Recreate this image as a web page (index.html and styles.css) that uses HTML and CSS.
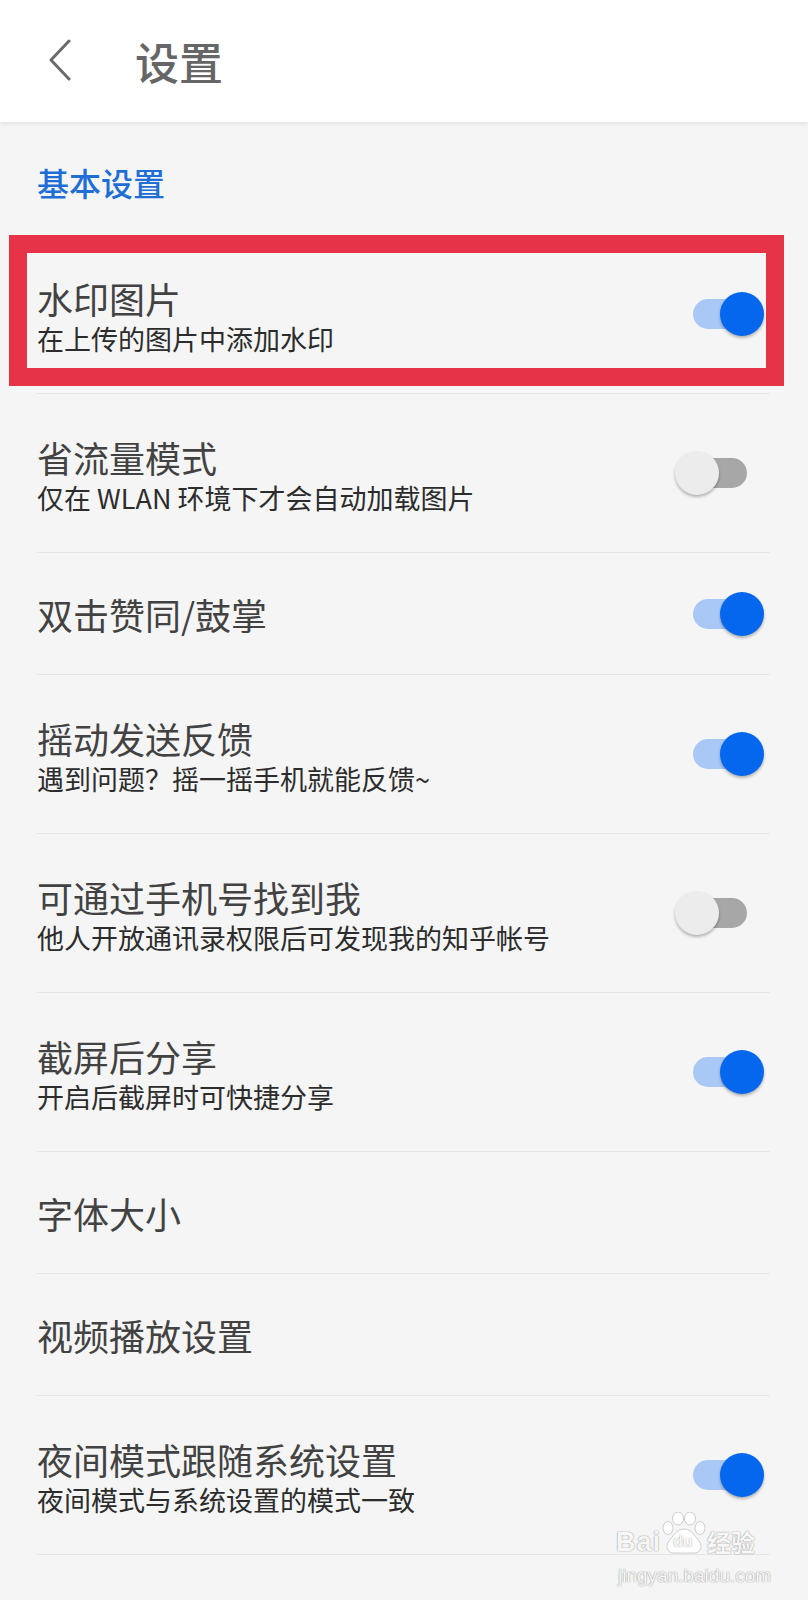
FILE: index.html
```html
<!DOCTYPE html>
<html lang="zh-CN">
<head>
<meta charset="utf-8">
<title>设置</title>
<link rel="stylesheet" href="styles.css">
</head>
<body>
<header class="topbar">
  <span class="back">
    <svg width="26" height="42" viewBox="0 0 26 42"><polyline points="22,2 4,21 22,40" fill="none" stroke="#6a6a6a" stroke-width="3" stroke-linecap="round" stroke-linejoin="round"/></svg>
  </span>
  <h1 class="title">设置</h1>
</header>
<main class="page">
  <div class="section-label">基本设置</div>
  <ul class="list">
    <li class="row two highlight">
      <div class="text"><div class="name">水印图片</div><div class="desc">在上传的图片中添加水印</div></div>
      <span class="switch on"><span class="track"></span><span class="knob"></span></span>
      <span class="mark"></span>
    </li>
    <li class="row two">
      <div class="text"><div class="name">省流量模式</div><div class="desc">仅在 WLAN 环境下才会自动加载图片</div></div>
      <span class="switch"><span class="track"></span><span class="knob"></span></span>
    </li>
    <li class="row one">
      <div class="text"><div class="name">双击赞同/鼓掌</div></div>
      <span class="switch on"><span class="track"></span><span class="knob"></span></span>
    </li>
    <li class="row two">
      <div class="text"><div class="name">摇动发送反馈</div><div class="desc">遇到问题？摇一摇手机就能反馈~</div></div>
      <span class="switch on"><span class="track"></span><span class="knob"></span></span>
    </li>
    <li class="row two">
      <div class="text"><div class="name">可通过手机号找到我</div><div class="desc">他人开放通讯录权限后可发现我的知乎帐号</div></div>
      <span class="switch"><span class="track"></span><span class="knob"></span></span>
    </li>
    <li class="row two">
      <div class="text"><div class="name">截屏后分享</div><div class="desc">开启后截屏时可快捷分享</div></div>
      <span class="switch on"><span class="track"></span><span class="knob"></span></span>
    </li>
    <li class="row one">
      <div class="text"><div class="name">字体大小</div></div>
    </li>
    <li class="row one">
      <div class="text"><div class="name">视频播放设置</div></div>
    </li>
    <li class="row two">
      <div class="text"><div class="name">夜间模式跟随系统设置</div><div class="desc">夜间模式与系统设置的模式一致</div></div>
      <span class="switch on"><span class="track"></span><span class="knob"></span></span>
    </li>
  </ul>
</main>
<div class="watermark">
  <div class="wm-top">
    <span class="wm-bai">Bai</span>
    <span class="wm-paw">
      <svg width="46" height="42" viewBox="0 0 46 42">
        <g fill="rgba(255,255,255,0.92)" stroke="rgba(0,0,0,0.18)" stroke-width="1">
          <ellipse cx="7" cy="16" rx="5" ry="6.5"/>
          <ellipse cx="17" cy="6.5" rx="5.5" ry="6.5"/>
          <ellipse cx="29" cy="6.5" rx="5.5" ry="6.5"/>
          <ellipse cx="39" cy="16" rx="5" ry="6.5"/>
          <path d="M23 17 C30 17 34 24 38 29 C42 34 40 41 33 41 L13 41 C6 41 4 34 8 29 C12 24 16 17 23 17 Z"/>
        </g>
      </svg>
      <span class="wm-du">du</span>
    </span>
    <span class="wm-jy">经验</span>
  </div>
  <div class="wm-url">jingyan.baidu.com</div>
</div>
</body>
</html>
```
FILE: styles.css
```css
* { box-sizing: border-box; }
html, body { margin: 0; padding: 0; }
body {
  width: 808px;
  min-height: 1600px;
  background: #f5f5f5;
  font-family: "Noto Sans CJK SC", "Noto Sans", "DejaVu Sans", sans-serif;
  position: relative;
  overflow: hidden;
}
.topbar {
  height: 122px;
  background: #ffffff;
  display: flex;
  align-items: center;
  box-shadow: 0 2px 4px rgba(0,0,0,0.07);
  position: relative;
  z-index: 1;
}
.back {
  display: flex;
  margin-left: 47px;
  margin-top: -2px;
}
.title {
  margin: 0 0 0 62px;
  font-size: 44px;
  line-height: 52px;
  font-weight: 500;
  color: #666666;
}
.page { display: block; }
.section-label {
  height: 113px;
  padding: 40px 0 0 37px;
  font-size: 32px;
  line-height: 40px;
  font-weight: 500;
  color: #1e6ed6;
}
.list {
  list-style: none;
  margin: 0;
  padding: 0;
}
.row {
  display: flex;
  align-items: center;
  margin: 0 38px 0 37px;
  padding-right: 5px;
  border-bottom: 1px solid #e6e6e6;
  box-sizing: content-box;
}
.row.two { height: 158px; }
.row.one { height: 121px; }
.row.two .text { padding-top: 6px; }
.text { flex: 1; }
.name {
  font-size: 36px;
  line-height: 44px;
  color: #424242;
}
.desc {
  font-size: 27px;
  line-height: 38px;
  color: #2c2c2c;
}
.switch {
  position: relative;
  width: 90px;
  height: 46px;
  flex: none;
}
.track {
  position: absolute;
  left: 18px;
  top: 8px;
  width: 54px;
  height: 30px;
  border-radius: 15px;
  background: #a7a7a7;
}
.knob {
  position: absolute;
  left: 0;
  top: 1px;
  width: 44px;
  height: 44px;
  border-radius: 50%;
  background: #ececec;
  box-shadow: 0 2px 3px rgba(0,0,0,0.28);
}
.switch.on .track { background: #a9c8f6; }
.switch.on .knob {
  left: 45px;
  background: #0467ee;
}
.highlight { position: relative; }
.mark {
  position: absolute;
  left: -28px;
  top: 0;
  width: 775px;
  height: 151px;
  border: 18px solid #e63347;
  pointer-events: none;
}
.watermark {
  position: absolute;
  left: 616px;
  top: 1508px;
  width: 150px;
  color: rgba(255,255,255,0.95);
  text-shadow: 0 0 1px rgba(0,0,0,0.4), 0 0 2px rgba(0,0,0,0.2);
}
.wm-top {
  display: flex;
  align-items: flex-end;
  height: 48px;
}
.wm-bai {
  font-family: "Liberation Sans", Arial, sans-serif;
  font-weight: bold;
  font-size: 27px;
  line-height: 28px;
  letter-spacing: 1px;
}
.wm-paw {
  position: relative;
  width: 46px;
  height: 42px;
  margin: 0 0 2px 0;
}
.wm-paw svg { display: block; }
.wm-du {
  position: absolute;
  left: 12px;
  top: 21px;
  font-family: "Liberation Sans", Arial, sans-serif;
  font-weight: bold;
  font-size: 16px;
  line-height: 18px;
  color: rgba(255,255,255,0.95);
  text-shadow: 0 0 1px rgba(0,0,0,0.5);
}
.wm-jy {
  font-size: 24px;
  line-height: 28px;
  font-weight: bold;
}
.wm-url {
  font-family: "Liberation Sans", Arial, sans-serif;
  font-size: 19px;
  line-height: 24px;
  margin-top: 8px;
  padding-left: 2px;
}
```
